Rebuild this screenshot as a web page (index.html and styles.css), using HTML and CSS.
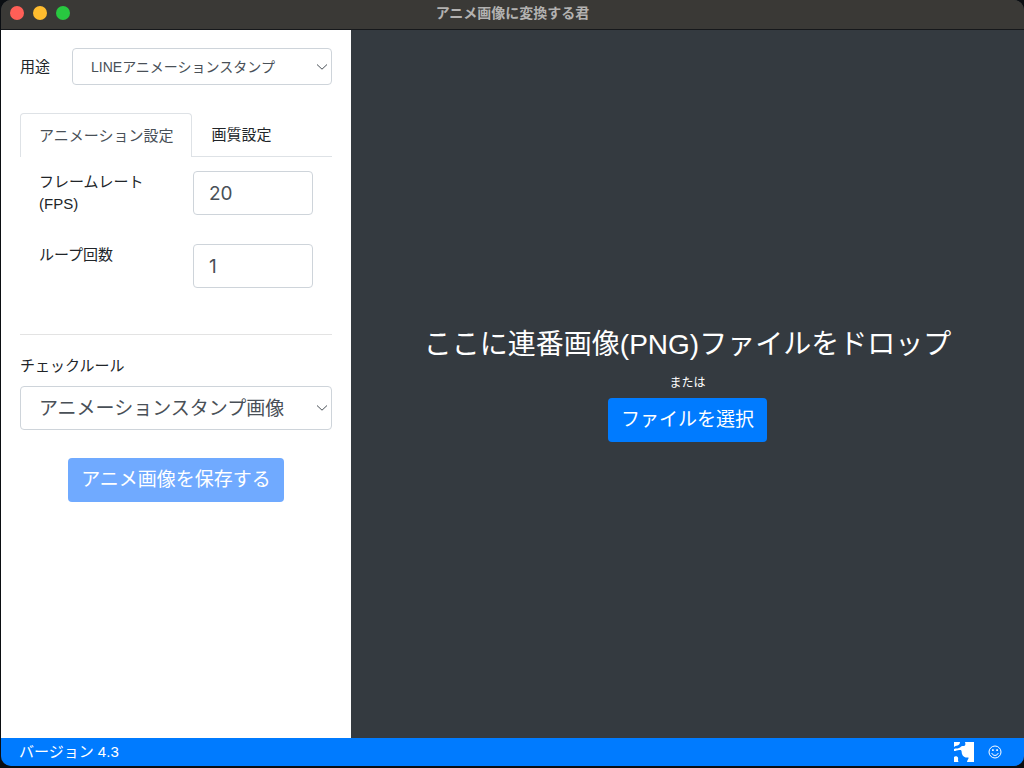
FILE: index.html
```
<!DOCTYPE html>
<html lang="ja">
<head>
<meta charset="utf-8">
<title>アニメ画像に変換する君</title>
<link rel="stylesheet" href="styles.css">
</head>
<body>
<div class="window">
  <header class="titlebar">
    <div class="lights">
      <button class="light light-close" type="button" aria-label="閉じる"></button>
      <button class="light light-min" type="button" aria-label="しまう"></button>
      <button class="light light-max" type="button" aria-label="拡大"></button>
    </div>
    <h1 class="title">アニメ画像に変換する君</h1>
  </header>
  <div class="main">
    <form class="sidebar">
      <div class="usage">
        <label for="usage">用途</label>
        <div class="select-wrap">
          <select class="select select-small" id="usage"><option>LINEアニメーションスタンプ</option></select>
          <svg class="chevron" viewBox="0 0 12 8" aria-hidden="true"><path d="M1 1.5 6 6.2 11 1.5"/></svg>
        </div>
      </div>
      <div class="tabs" role="tablist">
        <button class="tab tab-active" type="button" role="tab" aria-selected="true">アニメーション設定</button>
        <button class="tab" type="button" role="tab" aria-selected="false">画質設定</button>
      </div>
      <div class="fields">
        <label for="fps">フレームレート<br>(FPS)</label>
        <input class="input" id="fps" type="text" inputmode="numeric" value="20">
        <label for="loop">ループ回数</label>
        <input class="input" id="loop" type="text" inputmode="numeric" value="1">
      </div>
      <hr class="rule">
      <label class="check-label" for="check">チェックルール</label>
      <div class="select-wrap">
        <select class="select" id="check"><option>アニメーションスタンプ画像</option></select>
        <svg class="chevron" viewBox="0 0 12 8" aria-hidden="true"><path d="M1 1.5 6 6.2 11 1.5"/></svg>
      </div>
      <button class="button button-save" type="button" disabled>アニメ画像を保存する</button>
    </form>
    <section class="drop">
      <h2 class="drop-title">ここに連番画像(PNG)ファイルをドロップ</h2>
      <p class="drop-or">または</p>
      <button class="button" type="button">ファイルを選択</button>
    </section>
  </div>
  <footer class="status">
    <span>バージョン 4.3</span>
    <div class="status-icons">
      <a href="#" aria-label="サイト"><svg class="logo" viewBox="0 0 20 20"><path d="M0 0H6C6 2 5 3 3.500 3.500C2 4 1 4 0 5ZM11 0H20V20H13C13 18 15 17 14.500 15.500C12 16 9 15 8 12C7.500 10 8 8 6 8C4 7.500 2 9 0 9V7C2 6 3 7 5 6C7 5.500 7 3.500 9 4C11 4.500 12 3 11 0ZM0 15C1 14 3 14 4 15.500C4.500 17 3.500 18 4.500 20H0Z" fill="#fff"/></svg></a>
      <a href="#" aria-label="フィードバック"><svg class="smile" viewBox="0 0 14 14"><circle cx="7" cy="7" r="6"/><path d="M3.800 8C4.500 11.200 9.500 11.200 10.200 8"/><path d="M4.900 4.200V6M9.100 4.200V6" stroke-width="1.600"/></svg></a>
    </div>
  </footer>
</div>
</body>
</html>
```
FILE: styles.css
```
* {
  box-sizing: border-box;
}

body {
  margin: 0;
  padding: 0 0 2px 1px;
  height: 100vh;
  background: #0b0e12;
  color: #212529;
  font: 15px/22px "Liberation Sans", "Noto Sans CJK JP", sans-serif;
}

.window {
  display: flex;
  flex-direction: column;
  height: 100%;
  overflow: hidden;
  border-radius: 10px;
  background: #343a40;
}

.titlebar {
  display: grid;
  grid-template-columns: 1fr auto 1fr;
  align-items: center;
  height: 30px;
  padding: 0 9px 4px;
  background: #3a3936;
  border-bottom: 1px solid #16181b;
}

.lights {
  display: flex;
  gap: 9px;
}

.light {
  width: 14px;
  height: 14px;
  padding: 0;
  border: 0;
  border-radius: 50%;
}

.light-close { background: #ff5f57; }
.light-min { background: #febc2e; }
.light-max { background: #28c840; }

.title {
  margin: 0;
  color: #b3b2b1;
  font-size: 14px;
  font-weight: 700;
}

.main {
  display: flex;
  flex: 1;
  min-height: 0;
}

.sidebar {
  width: 350px;
  padding: 18px 19px;
  background: #fff;
}

.usage {
  display: flex;
  align-items: center;
  gap: 22px;
}

.select-wrap {
  position: relative;
  flex: 1;
}

.select,
.input {
  display: block;
  width: 100%;
  height: 44px;
  border: 1px solid #ced4da;
  border-radius: 4px;
  background: #fff;
  color: #495057;
  font-family: inherit;
  font-size: 19px;
}

.select {
  appearance: none;
  padding: 0 30px 0 18px;
}

.select-small {
  height: 37px;
  font-size: 14px;
}

.chevron {
  position: absolute;
  top: 50%;
  right: 4px;
  width: 12px;
  height: 8px;
  margin-top: -4px;
  fill: none;
  stroke: #495057;
  pointer-events: none;
}

.tabs {
  display: flex;
  margin-top: 28px;
  border-bottom: 1px solid #dee2e6;
}

.tab {
  height: 43px;
  padding: 0 18px;
  border: 1px solid transparent;
  border-bottom: 0;
  border-radius: 4px 4px 0 0;
  background: none;
  color: #212529;
  font: inherit;
}

.tab-active {
  margin-bottom: -1px;
  height: 44px;
  border-color: #dee2e6;
  background: #fff;
  color: #495057;
}

.fields {
  display: grid;
  grid-template-columns: 1fr 120px;
  row-gap: 29px;
  padding: 14px 19px 0;
}

.input {
  padding: 0 15px;
  font-family: Inter, "Noto Sans CJK JP", sans-serif;
}

.rule {
  height: 1px;
  margin: 46px 0 20px;
  border: 0;
  background: #e3e3e3;
}

.check-label {
  display: block;
  margin-bottom: 9px;
}

.button {
  height: 44px;
  padding: 0 13px;
  border: 0;
  border-radius: 4px;
  background: #007bff;
  color: #fff;
  font: inherit;
  font-size: 19px;
}

.button-save {
  display: block;
  margin: 28px auto 0;
  background: #70aaff;
}

.drop {
  display: flex;
  flex: 1;
  flex-direction: column;
  align-items: center;
  justify-content: center;
  background: #343a40;
  color: #fff;
}

.drop-title {
  margin: 0;
  font-size: 28px;
  font-weight: 400;
  line-height: 36px;
}

.drop-or {
  margin: 10px 0 4px;
  padding-bottom: 1px;
  font-size: 12px;
  line-height: 20px;
}

.status {
  display: flex;
  align-items: center;
  justify-content: space-between;
  height: 28px;
  padding: 0 22px 0 18px;
  background: #007bff;
  color: #fff;
}

.status-icons {
  display: flex;
  align-items: center;
  gap: 14px;
}

.status-icons a {
  display: flex;
}

.logo {
  width: 20px;
  height: 20px;
}

.smile {
  width: 14px;
  height: 14px;
  fill: none;
  stroke: #fff;
}
```
